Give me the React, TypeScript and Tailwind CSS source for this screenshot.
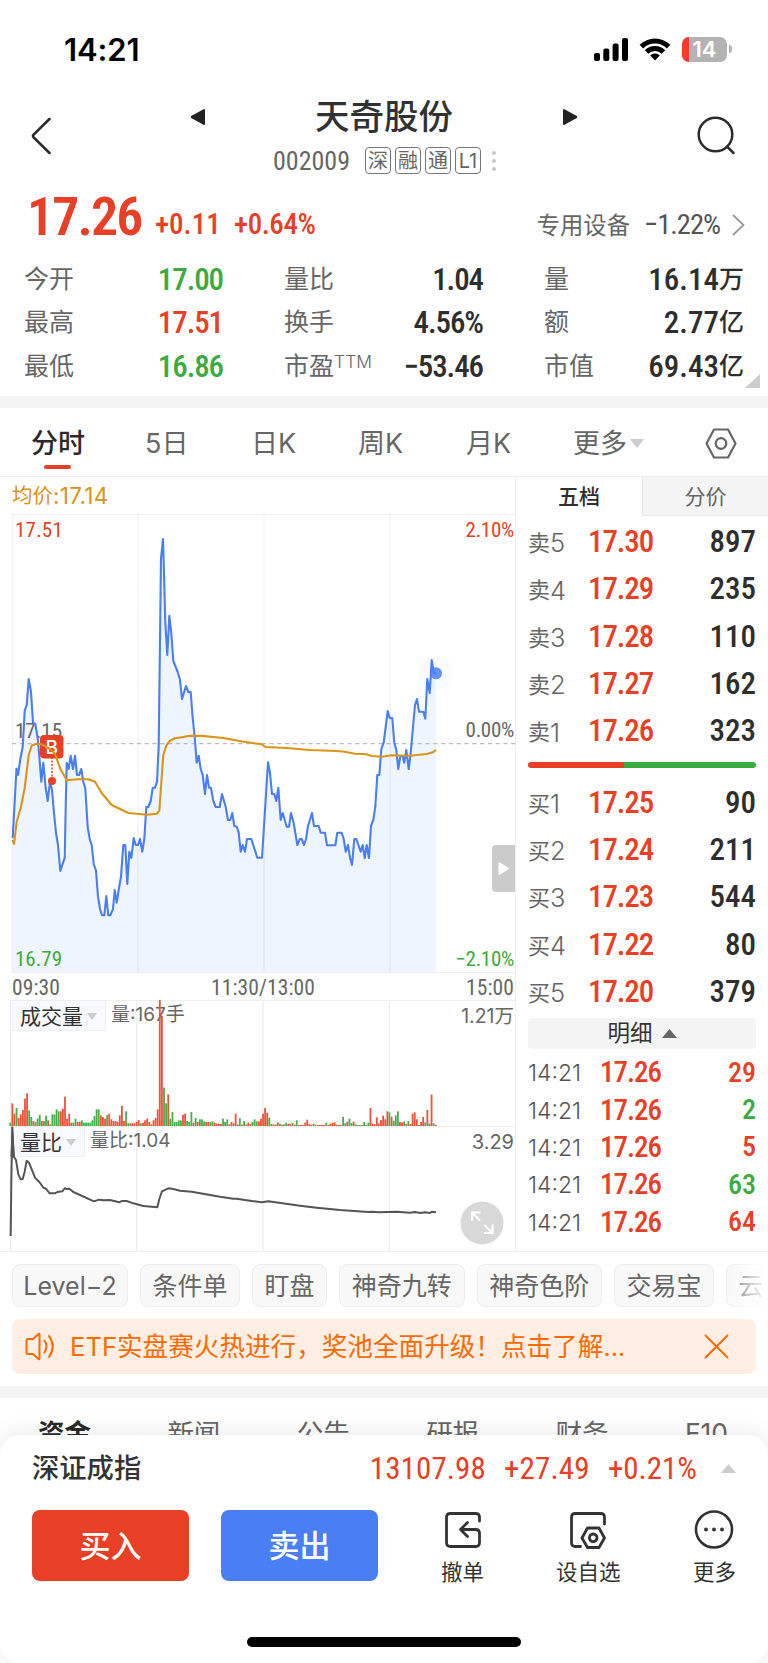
import React from "react";

const NUM = "font-['Roboto','Noto_Sans_CJK_SC',sans-serif] font-stretch-[75%]";
const NUM_TIGHT = "font-['Roboto','Noto_Sans_CJK_SC',sans-serif] font-stretch-[75%] tracking-[-0.035em]";
const RED = "text-[#e84026]";
const GREEN = "text-[#3bab41]";

const priceLine =
  "12.7,838 16.5,768.5 18,775 20.5,758 22.7,747 24.7,710.7 26.7,705 28.7,679 31,691.7 33,722.7 35.3,724 37.7,738 39.3,756 41.3,781.7 43.3,762.7 45.7,788 47.7,801 50,781.7 52,790 54,813 56,833 58,845 60.3,871 64.7,857.7 65.7,807 66.7,762.7 68.7,769 70.7,755.7 73,769 75,755.7 77,775 79,775 81.3,769 83.3,781.7 85.3,788.3 87.7,827 89.7,839 91.7,845 93.7,864 96,870.7 98,896.7 100,909 102,915.3 104.3,915.3 106.3,896 108.3,915.3 110.3,915.3 113,909 114.7,890 116.7,902.7 119,888 121,876.7 123.3,845 125.3,845 127.3,884 129.3,851.7 131.3,858 133.7,838 135.7,845 138,845 140,839 142.3,851.7 144.3,839 146.3,807 148.3,807 150.7,801 152.7,788 155,787.7 157,781.7 158.7,746 161,558.3 163,539 164,573 165.3,623.3 167.3,655 169.3,615.7 171.3,633 173.3,661 177.7,672 180,680 182,699 186,686 188.3,692 190.7,692 192.7,718 194.7,737 196.7,762.7 198.7,755.7 200.7,769 202.7,775 205,794 207,775 209,787.7 211,787.7 213.3,801 215.7,807 219.7,807 222,794 225.7,806.7 228,820 230.3,820 232.3,813 234.3,826 236.7,826.7 238.7,832.7 240.7,851.7 242.7,845 245,851.7 247,839 251.3,839 257.3,857.7 262,857.7 268,762.3 270,773 272,794 274.3,794 276.3,801 278.3,787.7 280.7,820 282.7,813 286.7,826.7 289,826.7 291,813 293.7,823 297.3,845 299.7,839 301.7,839 304,845 306,839 308,826 312,813 314,826 318.7,826 320.7,832.7 325,832.7 327,845.3 335.3,845.3 337.3,832.7 341.7,832.7 343.7,839 345.7,851.7 348,845 350,857.7 352,865 354.3,839 356.3,839 360.7,851.7 362.7,845 364.7,858 366.7,845 369,858 371,826 373.3,820 375.3,806.7 377.3,775 379.3,775 381.3,749 383.7,742.7 387.7,711 389.7,718 392.3,718 394.3,742.7 396.3,750 398.3,769 400.3,756 402.7,756 404.3,762.7 406.3,750 408.7,769 410.7,753 412.3,735 415,705 417,699 419,711.7 423.3,711.7 425.3,718.7 427.3,679 429.7,693 431.7,660 433.7,673 436,673.3";

const averageLine =
  "12.5,840 14,844 16.7,821.7 20.7,808 24.7,788 28.7,755 31.7,745.5 36.7,743.7 41.7,744.3 51.7,750 55,754 60,768 66.7,780.3 78.3,779.3 88.3,779.3 95,781.7 101.7,793 111.7,805 128.3,813 146.7,814.7 156.7,813.7 159.3,811 161.3,783 163.3,755 166.5,745 170,740.7 175,738.3 183.3,737 189.3,735.7 201.7,735.9 223.3,738 245,742 261.7,744.3 265.7,747 286.7,748 310,750 330,750.7 343.3,751.5 355,753.7 366.7,754.3 371.7,756 381.7,756.7 391.7,755.3 410,755.7 426.7,754 432.7,752.3 436,750";

const ratioLine =
  "32,768 34,600 37,442 41,530 48,540 55,583 62,598 68,597 74,575 80,542 87,548 105,593 118,606 131,624 137,625 149,640 165,640 172,636 187,634 195,624 199,627 208,626 220,636 282,664 297,659 310,661 330,660 358,667 365,663 380,663 400,670 430,678 472,682 478,657 486,634 505,625 520,627 540,632 575,635 660,650 700,656 710,656 755,663 786,667 805,664 900,677 950,683 1020,690 1105,696 1115,695 1135,697 1190,695 1230,698 1245,696 1260,699 1275,697 1290,699 1295,695 1308,697";

const volumes =
  "G10 R68 R37 G54 R24 R35 R48 R82 R98 G47 G27 R15 G12 G22 G33 R15 G15 G31 R17 G5 G35 G35 G50 G44 R44 R52 R88 R22 R37 R10 G10 G22 R12 R13 G17 G10 G10 G10 G10 G17 G30 G50 G50 R32 R27 R22 G33 R37 R20 R15 R15 R12 R32 R61 R15 G44 G8 R8 R8 R8 R13 R18 G8 R10 R17 R22 R12 R5 R17 R24 R50 R378 R330 G115 G68 R95 G22 G42 G12 G12 G17 G17 R33 R37 G15 G12 G42 R10 G24 R12 G20 G20 G14 R12 R12 G12 G14 R10 R7 R7 R6 G22 G12 G20 R5 R12 R8 R37 G5 G23 R4 G15 R4 R10 R6 G12 G20 G14 R14 R22 R37 R54 R40 G25 G6 R5 R4 R11 G6 R4 G5 G10 R7 R7 G9 R4 G17 R3 R3 R3 R10 R19 R6 R4 G6 R3 R3 R3 R3 R3 G10 R3 R7 R9 R11 R4 R3 R3 G27 G8 R13 G22 G9 R13 G5 G3 G3 R3 G12 G3 G10 R54 R7 R5 R26 R8 R18 R31 R20 R44 G41 R28 G16 G32 G44 R12 R11 G14 R6 G15 R6 R37 R41 R20 G3 R12 R27 G11 R48 G8 R94 G8 R4".split(
    " "
  );

const asks = [
  ["卖", "5", "17.30", "897"],
  ["卖", "4", "17.29", "235"],
  ["卖", "3", "17.28", "110"],
  ["卖", "2", "17.27", "162"],
  ["卖", "1", "17.26", "323"],
];
const bids = [
  ["买", "1", "17.25", "90"],
  ["买", "2", "17.24", "211"],
  ["买", "3", "17.23", "544"],
  ["买", "4", "17.22", "80"],
  ["买", "5", "17.20", "379"],
];
const trades: [string, string][] = [
  ["29", RED],
  ["2", GREEN],
  ["5", RED],
  ["63", GREEN],
  ["64", RED],
];

function StatusBar() {
  return (
    <div className="flex h-[98px] items-center justify-between pl-[64px] pr-[36px]">
      <span className="font-['Inter'] text-[31px] font-semibold leading-none tracking-[-0.1px] text-black">14:21</span>
      <div className="flex items-center">
        <svg className="mr-[11px]" width="34" height="24" viewBox="0 0 34 24">
          <rect x="0" y="16" width="6" height="8" rx="2" />
          <rect x="9.3" y="11.5" width="6" height="12.5" rx="2" />
          <rect x="18.6" y="6.5" width="6" height="17.5" rx="2" />
          <rect x="28" y="1" width="6" height="23" rx="2" />
        </svg>
        <svg className="mr-[11px]" width="32" height="24" viewBox="0 0 32 24">
          <path d="M0.6 7.8a22 22 0 0 1 30.8 0l-3.5 3.6a17 17 0 0 0-23.8 0z" />
          <path d="M5.9 13.2a14.4 14.4 0 0 1 20.2 0l-3.4 3.5a9.6 9.6 0 0 0-13.4 0z" />
          <path d="M11.2 18.5a6.9 6.9 0 0 1 9.6 0L16 23.6z" />
        </svg>
        <div className="relative flex h-[25px] w-[45px] items-center justify-center overflow-hidden rounded-[7px] bg-[#b3b3b3]">
          <div className="absolute left-0 top-0 h-full w-[7px] bg-[#ff3b30]" />
          <span className="relative font-['Inter'] text-[22px] font-semibold leading-none text-white">14</span>
        </div>
        <div className="ml-[2px] h-[8px] w-[3px] rounded-r-full bg-[#b3b3b3]" />
      </div>
    </div>
  );
}

function Header() {
  return (
    <div className="flex h-[88px] pl-[31px] pr-[32px]">
      <svg className="mt-[19px]" width="20" height="38" viewBox="0 0 20 38" fill="none" stroke="#2c2c2c" strokeWidth="2.6" strokeLinecap="round">
        <path d="M18.5 2L2.6 17.6q-1.2 1.4 0 2.8L18.5 36" />
      </svg>
      <svg className="ml-[139px] mt-[10px]" width="16" height="18" viewBox="0 0 16 18">
        <path d="M15 2v14q0 1.5-1.500.8L1.200 10q-1-1 0-2L13.500 1.200q1.500-.8 1.500.8z" fill="#222" />
      </svg>
      <div className="flex w-[356px] flex-col items-center">
        <h1 className="mt-[2px] text-[34.500px] font-medium leading-[34px] text-[#303133]">天奇股份</h1>
        <div className="mt-[13px] flex h-[27px] items-center pl-[1px]">
          <span className={`${NUM} mr-[15px] w-[77px] text-[26px] leading-none text-[#666]`}>002009</span>
          <div className="flex gap-[4px]">
            {["深", "融", "通", "L1"].map((t) => (
              <span key={t} className="flex h-[27px] w-[26px] items-center justify-center rounded-[4px] border border-[#777] text-[20px] leading-none text-[#666]">
                {t}
              </span>
            ))}
          </div>
          <div className="ml-[11px] flex flex-col gap-[4px]">
            <i className="size-[4px] rounded-full bg-[#c8c8c8]" />
            <i className="size-[4px] rounded-full bg-[#c8c8c8]" />
            <i className="size-[4px] rounded-full bg-[#c8c8c8]" />
          </div>
        </div>
      </div>
      <svg className="ml-[1px] mt-[10px]" width="16" height="18" viewBox="0 0 16 18">
        <path d="M0 2v14q0 1.500 1.500.8L13.800 10q1-1 0-2L1.500 1.200Q0 .5 0 2z" fill="#222" />
      </svg>
      <svg className="ml-auto mt-[18px]" width="39" height="39" viewBox="0 0 39 39" fill="none" stroke="#2c2c2c" strokeWidth="2.5" strokeLinecap="round">
        <circle cx="18.500" cy="18.500" r="16.800" />
        <path d="M30 30.500l6.500 6.500" />
      </svg>
    </div>
  );
}

function Stat({ label, value, color, unit }: { label: React.ReactNode; value: string; color?: string; unit?: string }) {
  return (
    <div className="flex h-[43.300px] items-center justify-between leading-none">
      <span className="text-[25px] text-[#666]">{label}</span>
      <span className={`${unit ? NUM : `${NUM_TIGHT} pr-[1px]`} flex items-center text-[31px] font-medium ${color ?? "text-[#2e2e2e]"}`}>
        {value}
        {unit && <span className="text-[25px]">{unit}</span>}
      </span>
    </div>
  );
}

function Quote() {
  return (
    <section className="relative h-[210px]">
      <div className="flex h-[71px] items-end pb-[13px] pl-[27px] pr-[23px] leading-none">
        <span className={`${NUM_TIGHT} w-[128px] text-[54px] font-semibold leading-[54px] ${RED}`}>17.26</span>
        <span className={`${NUM} w-[79px] pb-[5px] text-[29px] font-medium ${RED}`}>+0.11</span>
        <span className={`${NUM} pb-[5px] text-[29px] font-medium tracking-[-0.015em] ${RED}`}>+0.64%</span>
        <span className="ml-auto pb-[7px] text-[23.300px] text-[#666]">专用设备</span>
        <span className={`${NUM_TIGHT} ml-[14px] pb-[5px] text-[28.500px] text-[#555]`}>−1.22%</span>
        <svg className="mb-[8px] ml-[12px]" width="13" height="22" viewBox="0 0 13 22" fill="none" stroke="#999" strokeWidth="1.800">
          <path d="M1 1l10.500 10L1 21" />
        </svg>
      </div>
      <div className="grid grid-cols-[200px_200px_200px] gap-x-[60px] pl-[24px] pt-[1px]">
        <Stat label="今开" value="17.00" color={GREEN} />
        <Stat label="量比" value="1.04" />
        <Stat label="量" value="16.14" unit="万" />
        <Stat label="最高" value="17.51" color={RED} />
        <Stat label="换手" value="4.56%" />
        <Stat label="额" value="2.77" unit="亿" />
        <Stat label="最低" value="16.86" color={GREEN} />
        <Stat
          label={
            <span className="flex">
              市盈<span className="font-['Inter'] text-[17.500px] font-light leading-[15px]">TTM</span>
            </span>
          }
          value="−53.46"
        />
        <Stat label="市值" value="69.43" unit="亿" />
      </div>
      <svg className="absolute bottom-[8px] right-[8px]" width="15" height="14" viewBox="0 0 15 14">
        <path d="M15 0v14H0z" fill="#ccc" />
      </svg>
    </section>
  );
}

function Periods() {
  return (
    <nav className="relative flex h-[69px] items-center border-b border-[#eee] pt-[2px] text-[27px] leading-none text-[#666]">
      <span className="ml-[31px] w-[114px] font-medium text-[#2a2a2a]">分时</span>
      <span className="w-[106px]">5日</span>
      <span className="w-[107px]">日K</span>
      <span className="w-[108px]">周K</span>
      <span className="w-[107px]">月K</span>
      <span>更多</span>
      <svg className="ml-[3px]" width="14" height="9" viewBox="0 0 14 9">
        <path d="M0 0h14L7 9z" fill="#ccc" />
      </svg>
      <svg className="ml-auto mr-[31px]" width="32" height="31" viewBox="0 0 32 31" fill="none" stroke="#666" strokeWidth="2.200" strokeLinejoin="round">
        <path d="M9 1.500h14l7.500 14L23 29.500H9L1.500 15.500z" />
        <circle cx="16" cy="15.500" r="5.300" />
      </svg>
      <div className="absolute bottom-[7px] left-[44px] h-[4px] w-[27px] rounded-full bg-[#e84026]" />
    </nav>
  );
}

function PriceChart() {
  const label = `${NUM} absolute text-[21px] leading-none`;
  return (
    <div className="relative h-[459px]">
      <svg className="block" width="515" height="459" viewBox="0 514 515 459" fill="none">
        <path d="M12 514.500H515M12 972.500H515" stroke="#eee" />
        <path d={`M12.700 972L${priceLine}L436 972z`} fill="#eef5fe" />
        <path d="M12.500 514V972M138 514V972M264 514V972M390 514V972" stroke="#000" strokeOpacity=".05" strokeWidth="1.500" />
        <path d="M12 743.700H515" stroke="#bbb" strokeWidth="1.300" strokeDasharray="4.200 3.600" />
      </svg>
      <span className={`${label} left-[15px] top-[207px] text-[#666]`}>17.15</span>
      <svg className="absolute left-0 top-0" width="515" height="459" viewBox="0 514 515 459" fill="none">
        <polyline points={priceLine} stroke="#4a7ff3" strokeWidth="2.100" strokeLinejoin="round" />
        <path d="M52 757V780" stroke="#e84026" strokeWidth="1.500" strokeDasharray="2 1.500" />
        <circle cx="52" cy="781" r="4" fill="#e84026" />
        <rect x="40" y="735" width="23.500" height="23.500" rx="4" fill="#e84026" />
        <text x="51.800" y="753.500" textAnchor="middle" fontFamily="Inter" fontSize="19" fontWeight="500" fill="#fff">B</text>
        <polyline points={averageLine} stroke="#dc9317" strokeWidth="2.100" strokeLinejoin="round" />
        <circle cx="436" cy="673.300" r="17" fill="#4a7ff3" fillOpacity=".03" />
        <circle cx="436" cy="673.300" r="6" fill="#4a7ff3" fillOpacity=".85" />
      </svg>
      <span className={`${label} left-[15px] top-[6px] tracking-[0.2px] ${RED}`}>17.51</span>
      <span className={`${label} right-[1px] top-[6px] tracking-[-0.3px] ${RED}`}>2.10%</span>
      <span className={`${label} right-[1px] top-[206px] tracking-[-0.3px] text-[#666]`}>0.00%</span>
      <span className={`${label} left-[15px] top-[435px] ${GREEN}`}>16.79</span>
      <span className={`${label} right-[1px] top-[435px] tracking-[-0.3px] ${GREEN}`}>−2.10%</span>
      <div className="absolute right-0 top-[331px] flex h-[47px] w-[23px] items-center justify-center rounded-l-[4px] bg-[#cbcbcb]">
        <svg width="12" height="15" viewBox="0 0 12 15">
          <path d="M1 1.500v12l10-6z" fill="#fff" stroke="#fff" strokeLinejoin="round" />
        </svg>
      </div>
    </div>
  );
}

function Picker({ name, children }: { name: string; children: React.ReactNode }) {
  return (
    <div className="absolute left-[10px] top-0 flex items-center leading-none">
      <div className="flex h-[31px] items-center border border-[#eeeff3] bg-[#f8f9fe] pl-[9px] pr-[8px] pt-[1px]">
        <span className="text-[21px] text-[#333]">{name}</span>
        <svg className="ml-[4px]" width="10" height="7" viewBox="0 0 10 7">
          <path d="M0 0h10L5 7z" fill="#ccc" />
        </svg>
      </div>
      <span className="-mt-[2px] ml-[5px] text-[19px] text-[#666]">{children}</span>
    </div>
  );
}

function VolumeChart() {
  return (
    <div className="relative h-[126px]">
      <svg className="absolute left-0 top-0" width="515" height="126" viewBox="0 60 1545 378">
        <path d="M30 61.500H1545" stroke="#eee" strokeWidth="3" />
        <path d="M31.500 60V438M410 60V438M789 60V438M1168 60V438" stroke="#eee" strokeWidth="4" />
      </svg>
      <Picker name="成交量">量:167手</Picker>
      <svg className="absolute left-0 top-0" width="515" height="126" viewBox="0 60 1545 378">
        {volumes.map((v, i) => {
          const h = Number(v.slice(1));
          return <rect key={i} x={28 + i * 6.32} y={438 - h} width="5.400" height={h} fill={v[0] === "R" ? "#ee5238" : "#43b04a"} />;
        })}
      </svg>
      <span className="absolute right-[1px] top-[7px] text-[19.500px] leading-none text-[#666]">1.21万</span>
    </div>
  );
}

function RatioChart() {
  return (
    <div className="relative h-[125px]">
      <svg className="absolute left-0 top-0" width="515" height="125" viewBox="0 438 1545 375">
        <path d="M30 439.500H1545" stroke="#eee" strokeWidth="3" />
        <path d="M31.500 438V813M410 438V813M789 438V813M1168 438V813" stroke="#eee" strokeWidth="4" />
      </svg>
      <Picker name="量比">量比:1.04</Picker>
      <svg className="absolute left-0 top-0" width="515" height="125" viewBox="0 438 1545 375" fill="none">
        <path d="M33 530L37 442L43 530z" fill="#555" stroke="#555" strokeWidth="3" />
        <polyline points={ratioLine} stroke="#555" strokeWidth="6" strokeLinejoin="round" />
      </svg>
      <span className="absolute right-[1px] top-[6px] text-[20px] leading-none text-[#666]">3.29</span>
      <svg className="absolute left-[460px] top-[75px]" width="44" height="44" viewBox="0 0 44 44" fill="none" stroke="#fff" strokeWidth="2">
        <circle cx="22" cy="22" r="21.500" fill="#d8d8d8" stroke="none" />
        <path d="M12 20v-8.500h8.500M12 11.500l8 8M32.500 23.500v8.500H24M32.500 32l-8-8" />
      </svg>
    </div>
  );
}

function Level({ row }: { row: string[] }) {
  return (
    <div className="flex h-[47.300px] items-center leading-none">
      <span className="flex w-[60px] items-center pt-[3px] text-[22px] text-[#666]">
        {row[0]}
        <span className="text-[25.500px] font-light">{row[1]}</span>
      </span>
      <span className={`${NUM_TIGHT} text-[31px] font-medium ${RED}`}>{row[2]}</span>
      <span className={`${NUM} ml-auto text-[31px] font-medium text-[#2e2e2e]`}>{row[3]}</span>
    </div>
  );
}

function OrderBook() {
  return (
    <aside className="h-[775px] w-[253px] border-l border-[#eee]">
      <div className="flex h-[39px] text-[21px] leading-none">
        <span className="flex w-[126px] items-center justify-center font-medium text-[#2e2e2e]">五档</span>
        <span className="flex flex-1 items-center justify-center border-b border-l border-[#e8e8e8] bg-[#f4f4f4] text-[#666]">分价</span>
      </div>
      <div className="pl-[12px] pr-[12px]">
        <div className="pt-[2px]">{asks.map((r) => <Level key={r[1]} row={r} />)}</div>
        <div className="mt-[8px] flex h-[6px] w-[228px] overflow-hidden rounded-full">
          <i className="w-[96px] bg-[#e84026]" />
          <i className="flex-1 bg-[#3bab41]" />
        </div>
        <div className="mt-[10px]">{bids.map((r) => <Level key={r[1]} row={r} />)}</div>
        <div className="mt-[3px] flex h-[31px] items-center justify-center rounded-[4px] bg-[#f4f4f4] text-[22.500px] leading-none text-[#333]">
          明细
          <svg className="ml-[9px]" width="15" height="9" viewBox="0 0 15 9">
            <path d="M0 9h15L7.500 0z" fill="#666" />
          </svg>
        </div>
        <div className="pt-[5px]">
          {trades.map(([n, c], i) => (
            <div key={i} className="flex h-[37.400px] items-center leading-none">
              <span className="w-[72px] pt-[2px] font-['Inter'] text-[23px] font-light text-[#555]">14:21</span>
              <span className={`${NUM_TIGHT} text-[29px] font-medium ${RED}`}>17.26</span>
              <span className={`${NUM} ml-auto text-[28px] font-medium ${c}`}>{n}</span>
            </div>
          ))}
        </div>
      </div>
    </aside>
  );
}

function Tools() {
  const chip = "flex h-[43px] shrink-0 items-center justify-center rounded-[8px] border border-[#ececec] bg-[#f8f8f8] pt-[2px]";
  return (
    <div className="relative flex h-[55px] gap-[12px] overflow-hidden pl-[12px] text-[25px] leading-none text-[#666]">
      <span className={`${chip} w-[116px]`}>Level−2</span>
      <span className={`${chip} w-[100px]`}>条件单</span>
      <span className={`${chip} w-[75px]`}>盯盘</span>
      <span className={`${chip} w-[125.500px]`}>神奇九转</span>
      <span className={`${chip} w-[125.500px]`}>神奇色阶</span>
      <span className={`${chip} w-[100px]`}>交易宝</span>
      <span className={`${chip} w-[50px]`}>云</span>
      <div className="absolute right-0 top-0 h-full w-[41px] bg-gradient-to-r from-white/0 via-white/60 to-white" />
    </div>
  );
}

function Notice() {
  return (
    <div className="mx-[12px] flex h-[55px] items-center rounded-[8px] bg-[#ffeee4] text-[25.600px] leading-none text-[#ff6a00]">
      <svg className="ml-[13px]" width="30" height="29" viewBox="0 0 30 29" fill="none" stroke="#ff6a00" strokeWidth="2" strokeLinejoin="round" strokeLinecap="round">
        <path d="M8 7H3q-1.500 0-1.500 1.500v12Q1.500 22 3 22h5l5.500 5q1 .8 1-.5v-24q0-1.300-1-.5zM19.500 8.500q4 6 0 12M24 4q7.500 10.500 0 21" />
      </svg>
      <span className="ml-[15px] pt-px">ETF实盘赛火热进行，奖池全面升级！点击了解...</span>
      <svg className="ml-auto mr-[27px]" width="25" height="25" viewBox="0 0 25 25" stroke="#ff6a00" strokeWidth="2">
        <path d="M1 1l23 23M24 1L1 24" />
      </svg>
    </div>
  );
}

function BottomSheet() {
  const n = `${NUM} text-[31px] ${RED}`;
  const item = "flex flex-col items-center text-[21.500px] leading-none text-[#333]";
  return (
    <footer className="relative h-[228px] rounded-[20px] bg-white shadow-[0_-2px_24px_rgba(0,0,0,0.09)]">
      <div className="flex h-[66px] items-center pl-[32px] pr-[32px] leading-none">
        <span className="pt-px text-[27.300px] font-medium text-[#333]">深证成指</span>
        <span className={`${n} ml-auto tracking-[0.1px]`}>13107.98</span>
        <span className={`${n} ml-[18px] tracking-[0.2px]`}>+27.49</span>
        <span className={`${n} ml-[18px]`}>+0.21%</span>
        <svg className="ml-[24px]" width="15" height="9" viewBox="0 0 15 9">
          <path d="M0 9h15L7.500 0z" fill="#ccc" />
        </svg>
      </div>
      <div className="flex pl-[32px] pr-[32px] pt-[9px]">
        <button className="h-[71px] w-[157px] rounded-[8px] bg-[#e84026] text-[31px] font-medium leading-none text-white">买入</button>
        <button className="ml-[32px] h-[71px] w-[157px] rounded-[8px] bg-[#4a7ff3] text-[31px] font-medium leading-none text-white">卖出</button>
        <div className={`${item} ml-[63px]`}>
          <svg width="40" height="40" viewBox="0 0 40 40" fill="none" stroke="#333" strokeWidth="2.800" strokeLinecap="round" strokeLinejoin="round">
            <path d="M36.500 11V7.500q0-4-4-4h-25q-4 0-4 4v25q0 4 4 4h25q4 0 4-4v-9q0-4-4-4H18M24.500 12.500l-7 7 7 7" />
          </svg>
          <span className="mt-[12px]">撤单</span>
        </div>
        <div className={`${item} ml-[72px]`}>
          <svg width="40" height="40" viewBox="0 0 40 40" fill="none" stroke="#333" strokeWidth="2.800" strokeLinecap="round" strokeLinejoin="round">
            <path d="M36.500 14V7.500q0-4-4-4h-25q-4 0-4 4v25q0 4 4 4h5M19.500 18h11.500l5.500 10-5.500 9.500H19.500L14 28z" />
            <circle cx="25.200" cy="27.800" r="3.800" />
          </svg>
          <span className="mt-[12px]">设自选</span>
        </div>
        <div className={`${item} ml-auto`}>
          <svg width="40" height="40" viewBox="0 0 40 40" fill="none" stroke="#333" strokeWidth="2.600">
            <circle cx="20" cy="19.500" r="18" />
            <g fill="#333" stroke="none">
              <circle cx="12" cy="19.500" r="2" />
              <circle cx="20" cy="19.500" r="2" />
              <circle cx="28" cy="19.500" r="2" />
            </g>
          </svg>
          <span className="mt-[12px]">更多</span>
        </div>
      </div>
      <div className="mx-auto mt-[53px] h-[10px] w-[274px] rounded-full bg-black" />
    </footer>
  );
}

export default function App() {
  return (
    <main className="flex h-[1663px] w-[768px] flex-col overflow-hidden bg-white font-['Inter','Noto_Sans_CJK_SC',sans-serif]">
      <StatusBar />
      <Header />
      <Quote />
      <div className="h-[12px] shrink-0 bg-[#f4f4f4]" />
      <Periods />
      <div className="flex h-[775px] border-b border-[#eee]">
        <div className="w-[515px]">
          <div className="flex h-[37px] items-center pl-[12px] pt-[2px] text-[20.500px] leading-none text-[#dc9317]">
            均价<span className="text-[22.500px] tracking-[0.3px]">:17.14</span>
          </div>
          <PriceChart />
          <div className={`${NUM} flex h-[27px] items-center justify-between pl-[12px] pr-[1px] pt-[2px] text-[21.500px] leading-none tracking-[0.1px] text-[#666]`}>
            <span>09:30</span>
            <span>11:30/13:00</span>
            <span>15:00</span>
          </div>
          <VolumeChart />
          <RatioChart />
        </div>
        <OrderBook />
      </div>
      <div className="h-[12px] shrink-0" />
      <Tools />
      <Notice />
      <div className="mt-[12px] h-[12px] shrink-0 bg-[#f4f4f4]" />
      <div className="flex h-[37px] shrink-0 pl-[38px] pr-[40px] pt-[20px] text-[26.500px] leading-[30px] text-[#666]">
        <span className="w-[130px] font-bold text-[#2a2a2a]">资金</span>
        <span className="w-[130px]">新闻</span>
        <span className="w-[130px]">公告</span>
        <span className="w-[130px]">研报</span>
        <span className="w-[130px]">财务</span>
        <span>F10</span>
      </div>
      <BottomSheet />
    </main>
  );
}
